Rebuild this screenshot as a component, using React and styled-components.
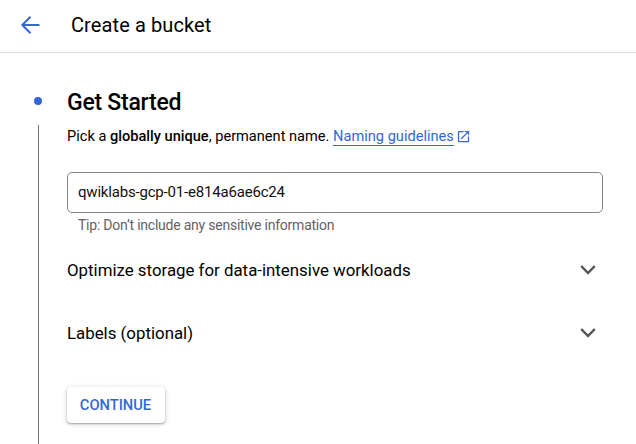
import React from 'react';
import styled, { createGlobalStyle } from 'styled-components';

const Global = createGlobalStyle`
  * { box-sizing: border-box; }
  body { margin: 0; background: #fff; color: #000; font-family: Roboto, sans-serif; overflow: hidden; }
`;
const Page = styled.div`height: 444px; display: flex; flex-direction: column; overflow: hidden;`;
const Header = styled.header`
  height: 53px; flex: none; display: flex; align-items: center; gap: 29px;
  padding: 0 0 2px 18px; border-bottom: 1px solid #dadce0;
`;
const BackButton = styled.button`
  display: flex; padding: 0; border: 0; background: none; color: #3367d6;
`;
const Title = styled.h1`margin: 0; font-size: 20px; line-height: 24px; font-weight: 400; letter-spacing: .1px;`;
const Stepper = styled.main`flex: 1; min-height: 0; display: flex; padding: 35px 33px 0 34px;`;
const Rail = styled.div`width: 33px; flex: none; display: flex; flex-direction: column; padding-top: 9px;`;
const Dot = styled.span`width: 8px; height: 8px; flex: none; border-radius: 50%; background: #3367d6;`;
const Line = styled.span`width: 1px; flex: 1; margin: 20px 0 0 4px; background: #757575;`;
const Step = styled.section`flex: 1; min-width: 0; display: flex; flex-direction: column; align-items: stretch;`;
const StepTitle = styled.h2`
  margin: 0; padding-top: 1px; font-size: 23px; line-height: 28px; font-weight: 500; letter-spacing: -.25px;
`;
const Description = styled.p`margin: 9px 0 0; font-size: 14.6px; line-height: 20px; height: 20px; white-space: nowrap;`;
const Strong = styled.b`font-weight: 500;`;
const Link = styled.a`
  display: inline-flex; align-items: center; gap: 1px; color: #3367d6; text-decoration: none;
`;
const LinkText = styled.span`border-bottom: 1px solid currentColor; line-height: 18px;`;
const Input = styled.input`
  width: 100%; height: 41px; margin-top: 26px; padding: 0 10px 2px; border: 1px solid #80868b; border-radius: 5px;
  font: 400 15px Roboto, sans-serif; letter-spacing: -.19px; color: #111; outline: 0;
`;
const Hint = styled.div`
  margin: 4px 0 5px 11px; font-size: 14px; line-height: 16px; letter-spacing: -.23px; color: #5f6368;
`;
const Row = styled.div`
  height: 63px; display: flex; align-items: center; justify-content: space-between; padding-right: 3px;
  font-size: 16.85px;
`;
const Continue = styled.button`
  align-self: flex-start; width: 98px; height: 36px; margin-top: 23px; padding: 0 1px 0 0; border: 0; border-radius: 4px;
  background: #fff; color: #3367d6; font: 500 14.7px Roboto, sans-serif;
  box-shadow: 0 1px 2px rgba(0,0,0,.32), 0 1px 6px rgba(0,0,0,.14);
`;
const ExternalSvg = styled.svg`margin: 0 0 1px 1px;`;

const ArrowIcon = () => (
  <svg width="24" height="24" viewBox="0 0 24 24" fill="none" stroke="currentColor" strokeWidth="2"><path d="M21.500 12H5M12.500 3.800L4.300 12l8.200 8.200" /></svg>
);
const ExternalIcon = () => (
  <ExternalSvg width="15" height="15" viewBox="0 0 24 24" fill="currentColor"><path d="M19 19H5V5h7V3H5a2 2 0 0 0-2 2v14a2 2 0 0 0 2 2h14c1.100 0 2-.9 2-2v-7h-2zM14 3v2h3.590l-9.830 9.830 1.410 1.410L19 6.410V10h2V3z" /></ExternalSvg>
);
const Chevron = () => (
  <svg width="24" height="24" viewBox="0 0 24 24" fill="none" stroke="#555" strokeWidth="2.500"><path d="M5.200 8l6.800 7 6.800-7" /></svg>
);

export default function App() {
  return (
    <Page>
      <Global />
      <Header>
        <BackButton aria-label="Back"><ArrowIcon /></BackButton>
        <Title>Create a bucket</Title>
      </Header>
      <Stepper>
        <Rail><Dot /><Line /></Rail>
        <Step>
          <StepTitle>Get Started</StepTitle>
          <Description>
            Pick a <Strong>globally unique</Strong>, permanent name.{' '}
            <Link><LinkText>Naming guidelines</LinkText><ExternalIcon /></Link>
          </Description>
          <Input defaultValue="qwiklabs-gcp-01-e814a6ae6c24" />
          <Hint>Tip: Don’t include any sensitive information</Hint>
          <Row>Optimize storage for data-intensive workloads<Chevron /></Row>
          <Row>Labels (optional)<Chevron /></Row>
          <Continue>CONTINUE</Continue>
        </Step>
      </Stepper>
    </Page>
  );
}
